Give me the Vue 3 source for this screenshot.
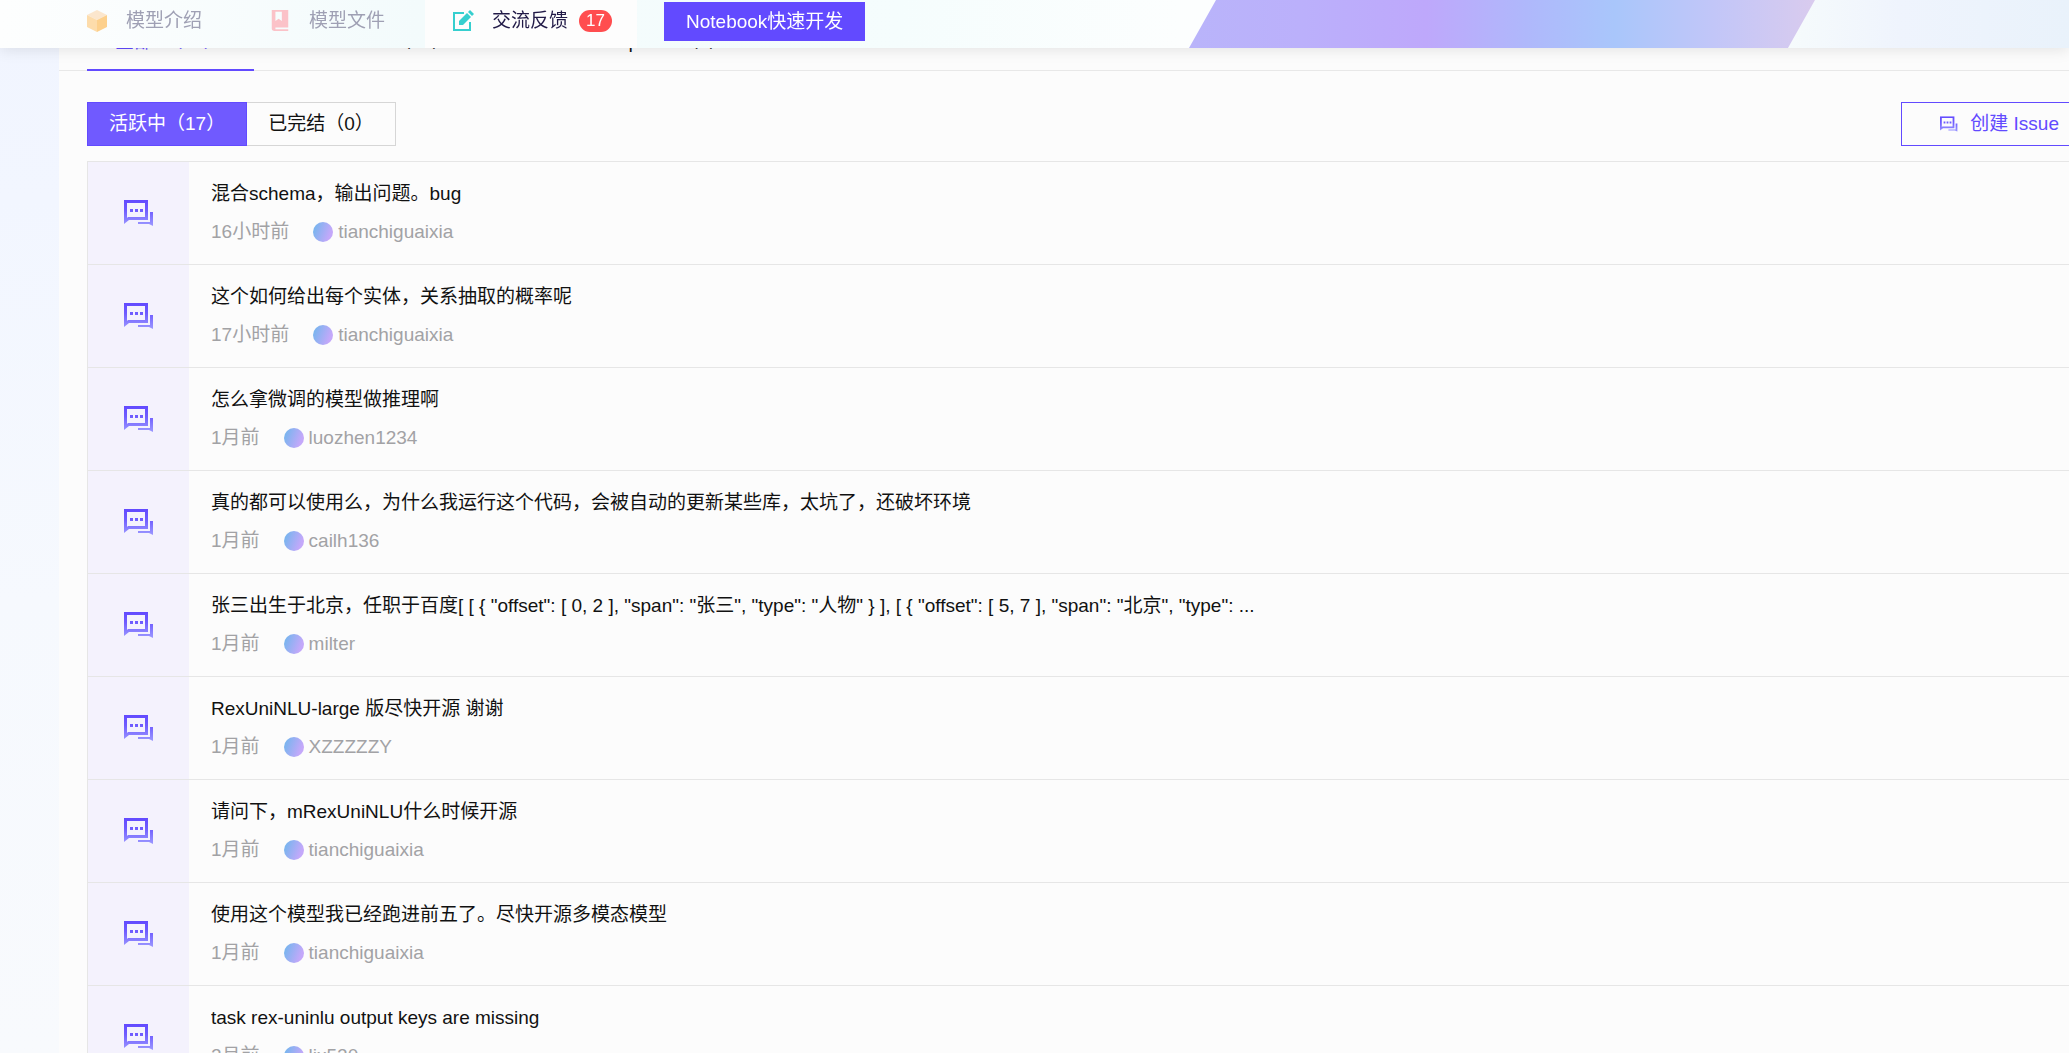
<script setup>
import { ref } from 'vue'

const tab = ref('all')
const status = ref('active')

const issues = [
  { title: '混合schema，输出问题。bug', time: '16小时前', user: 'tianchiguaixia' },
  { title: '这个如何给出每个实体，关系抽取的概率呢', time: '17小时前', user: 'tianchiguaixia' },
  { title: '怎么拿微调的模型做推理啊', time: '1月前', user: 'luozhen1234' },
  { title: '真的都可以使用么，为什么我运行这个代码，会被自动的更新某些库，太坑了，还破坏环境', time: '1月前', user: 'cailh136' },
  { title: '张三出生于北京，任职于百度[ [ { "offset": [ 0, 2 ], "span": "张三", "type": "人物" } ], [ { "offset": [ 5, 7 ], "span": "北京", "type": ...', time: '1月前', user: 'milter' },
  { title: 'RexUniNLU-large 版尽快开源 谢谢', time: '1月前', user: 'XZZZZZY' },
  { title: '请问下，mRexUniNLU什么时候开源', time: '1月前', user: 'tianchiguaixia' },
  { title: '使用这个模型我已经跑进前五了。尽快开源多模态模型', time: '1月前', user: 'tianchiguaixia' },
  { title: 'task rex-uninlu output keys are missing', time: '2月前', user: 'lix520' }
]
</script>

<template>
  <div class="page">
    <header class="top-bar">
      <svg class="banner" viewBox="0 0 880 48" preserveAspectRatio="none" aria-hidden="true">
        <defs>
          <linearGradient id="band" x1="0" x2="1" y1="0" y2="0">
            <stop offset="0" stop-color="#b9b4fa" />
            <stop offset="0.18" stop-color="#bbb0fb" />
            <stop offset="0.38" stop-color="#bea8fb" />
            <stop offset="0.54" stop-color="#afb8fb" />
            <stop offset="0.68" stop-color="#a9c6fb" />
            <stop offset="0.84" stop-color="#c2c6f8" />
            <stop offset="1" stop-color="#d9cbee" />
          </linearGradient>
          <linearGradient id="tail" x1="0" x2="1" y1="0" y2="0">
            <stop offset="0" stop-color="#f6fbfc" />
            <stop offset="0.4" stop-color="#eff4fd" />
            <stop offset="1" stop-color="#e9f2fb" />
          </linearGradient>
        </defs>
        <path d="M626 0H880V48H599z" fill="url(#tail)" />
        <path d="M27 0H626L599 48H0z" fill="url(#band)" />
      </svg>
      <nav class="nav">
        <a href="#" class="nav-item faded">
          <svg class="nav-icon" viewBox="0 0 20 22" aria-hidden="true">
            <path d="M10 0l10 5-10 5L0 5z" fill="#fbe6cd" />
            <path d="M0 5l10 5v12L0 17z" fill="#fddcab" />
            <path d="M20 5l-10 5v12l10-5z" fill="#fdd08c" />
          </svg>
          模型介绍
        </a>
        <a href="#" class="nav-item faded">
          <svg class="nav-icon" viewBox="0 0 20 24" aria-hidden="true">
            <path d="M1 0h18v19H5v2h14v2H4a3 3 0 0 1-3-3zM5 2v10l3.500-2.500L12 12V2z" fill="#fbc2c8" fill-rule="evenodd" />
          </svg>
          模型文件
        </a>
        <a href="#" class="nav-item current">
          <svg class="nav-icon" viewBox="0 0 22 22" aria-hidden="true">
            <path d="M12 3H2v17h16v-8" fill="none" stroke="#36cfcf" stroke-width="2" />
            <path d="M7 15v-4l8-8 4 4-8 8zM16 2l2-2 4 4-2 2z" fill="#36cfcf" />
          </svg>
          交流反馈
          <span class="count">17</span>
        </a>
        <button type="button" class="notebook">Notebook快速开发</button>
      </nav>
    </header>

    <main class="panel">
      <div class="tabs">
        <button type="button" class="tab" :class="{ active: tab === 'all' }" @click="tab = 'all'">全部&nbsp; （17）</button>
        <button type="button" class="tab" :class="{ active: tab === 'issue' }" @click="tab = 'issue'">Issue&nbsp; （17）</button>
        <button type="button" class="tab" :class="{ active: tab === 'pr' }" @click="tab = 'pr'">Pull Request&nbsp; （0）</button>
      </div>

      <div class="toolbar">
        <div class="switch">
          <button type="button" :class="{ on: status === 'active' }" @click="status = 'active'">活跃中（17）</button>
          <button type="button" :class="{ on: status === 'done' }" @click="status = 'done'">已完结（0）</button>
        </div>
        <button type="button" class="create">
          <svg class="chat-small" viewBox="0 0 30 26" aria-hidden="true">
            <use href="#chat" />
          </svg>
          创建 Issue
        </button>
      </div>

      <ul class="issues">
        <li v-for="(issue, i) in issues" :key="i" class="issue">
          <div class="issue-mark">
            <svg class="chat" viewBox="0 0 30 26" aria-hidden="true">
              <use href="#chat" />
            </svg>
          </div>
          <div class="issue-body">
            <a href="#" class="title">{{ issue.title }}</a>
            <div class="meta">
              <span>{{ issue.time }}</span>
              <span class="user"><i class="avatar"></i>{{ issue.user }}</span>
            </div>
          </div>
        </li>
      </ul>
    </main>

    <svg class="symbols" aria-hidden="true">
      <defs>
        <linearGradient id="chat-fill" gradientUnits="userSpaceOnUse" x1="0" y1="0" x2="0" y2="26">
          <stop offset="0" stop-color="#624aff" />
          <stop offset="0.4" stop-color="#6f5cff" />
          <stop offset="1" stop-color="#9c99ff" />
        </linearGradient>
        <symbol id="chat" viewBox="0 0 30 26">
          <path d="M0 0h24v20H5l-5 4zM3 3v15l1-1h17V3zM6 9h3v3H6zM11 9h3v3h-3zM16 9h3v3h-3zM26 12h3v14l-4-2H14v-2h12z" fill="url(#chat-fill)" fill-rule="evenodd" />
        </symbol>
      </defs>
    </svg>
  </div>
</template>

<style>
body {
  overflow: hidden;
}
</style>

<style scoped>
.page {
  height: 100vh;
  box-sizing: border-box;
  overflow: hidden;
  padding-left: 59px;
  background: linear-gradient(#f1f5ff 0, #f2f6ff 200px, #f6f9fe 600px, #f8fafd 100%);
  font-family: "Liberation Sans", "Noto Sans CJK SC", sans-serif;
  font-size: 19px;
  line-height: 28px;
  color: #111;
}

button {
  font: inherit;
  color: inherit;
  cursor: pointer;
  white-space: nowrap;
}

a {
  color: inherit;
  text-decoration: none;
}

.top-bar {
  position: fixed;
  top: 0;
  left: 0;
  right: 0;
  z-index: 2;
  height: 48px;
  background: linear-gradient(90deg, #fdfefe 0, #f3fbfc 420px, #f5fdfd 900px, #fcfefe 1180px);
  box-shadow: 0 2px 14px rgba(0, 0, 0, 0.1);
}

.banner {
  position: absolute;
  right: 0;
  top: 0;
  width: 880px;
  height: 48px;
}

.nav {
  display: flex;
  height: 48px;
  padding-left: 59px;
}

.nav-item {
  display: flex;
  align-items: center;
  box-sizing: border-box;
  height: 48px;
  padding: 0 0 6px 27px;
  white-space: nowrap;
}

.nav-icon {
  flex-shrink: 0;
  width: 22px;
  height: 22px;
  margin-right: 18px;
}

.faded {
  width: 183px;
  color: #9fa0b4;
}

.current {
  width: 212px;
  background: #fdfdfd;
  color: #211a47;
}

.count {
  margin-left: 11px;
  padding: 0 7px;
  border-radius: 11px;
  background: #ff4d4f;
  color: #fff;
  font-size: 17px;
  line-height: 22px;
}

.notebook {
  height: 39px;
  margin: 2px 0 0 27px;
  padding: 1px 22px 0;
  border: 0;
  background: #624aff;
  color: #fff;
}

.panel {
  height: 100%;
  background: #fcfcfc;
}

.tabs {
  display: flex;
  gap: 54px;
  padding: 14px 0 0 28px;
  border-bottom: 1px solid #e8e8e8;
}

.tab {
  height: 57px;
  min-width: 167px;
  margin-bottom: -1px;
  padding: 0 28px;
  border: 0;
  border-bottom: 2px solid transparent;
  background: none;
  text-align: left;
}

.tab.active {
  border-color: #624aff;
  color: #624aff;
}

.toolbar {
  display: flex;
  justify-content: space-between;
  padding: 31px 0 15px 28px;
}

.switch {
  display: flex;
}

.switch button {
  height: 44px;
  padding: 0 21px;
  border: 1px solid #d6d6d6;
  border-left: 0;
  background: #fcfcfc;
}

.switch .on {
  border: 1px solid #624aff;
  background: #705aff;
  color: #fff;
}

.create {
  display: flex;
  align-items: center;
  height: 44px;
  padding: 0 10px 0 38px;
  border: 1px solid #624aff;
  border-right: 0;
  background: #fcfcfc;
  color: #624aff;
}

.chat-small {
  width: 18px;
  height: 16px;
  margin-right: 12px;
}

.issues {
  margin: 0 0 0 28px;
  padding: 0;
  border-top: 1px solid #e6e6e6;
  border-left: 1px solid #e6e6e6;
  list-style: none;
}

.issue {
  display: flex;
  box-sizing: border-box;
  height: 103px;
  border-bottom: 1px solid #e6e6e6;
}

.issue-mark {
  display: flex;
  align-items: center;
  justify-content: center;
  width: 101px;
  background: #f4f2fd;
}

.chat {
  width: 30px;
  height: 26px;
}

.issue-body {
  flex: 1;
  min-width: 0;
  padding: 18px 22px 0;
}

.title {
  display: block;
  overflow: hidden;
  white-space: nowrap;
  text-overflow: ellipsis;
}

.meta {
  display: flex;
  gap: 24px;
  margin-top: 10px;
  color: #a2a2a5;
}

.user {
  display: flex;
  align-items: center;
}

.avatar {
  width: 20px;
  height: 20px;
  margin-right: 5px;
  border-radius: 50%;
  background: linear-gradient(110deg, #77b5ee 10%, #c4a8fa 80%);
}

.symbols {
  position: absolute;
  width: 0;
  height: 0;
}
</style>
